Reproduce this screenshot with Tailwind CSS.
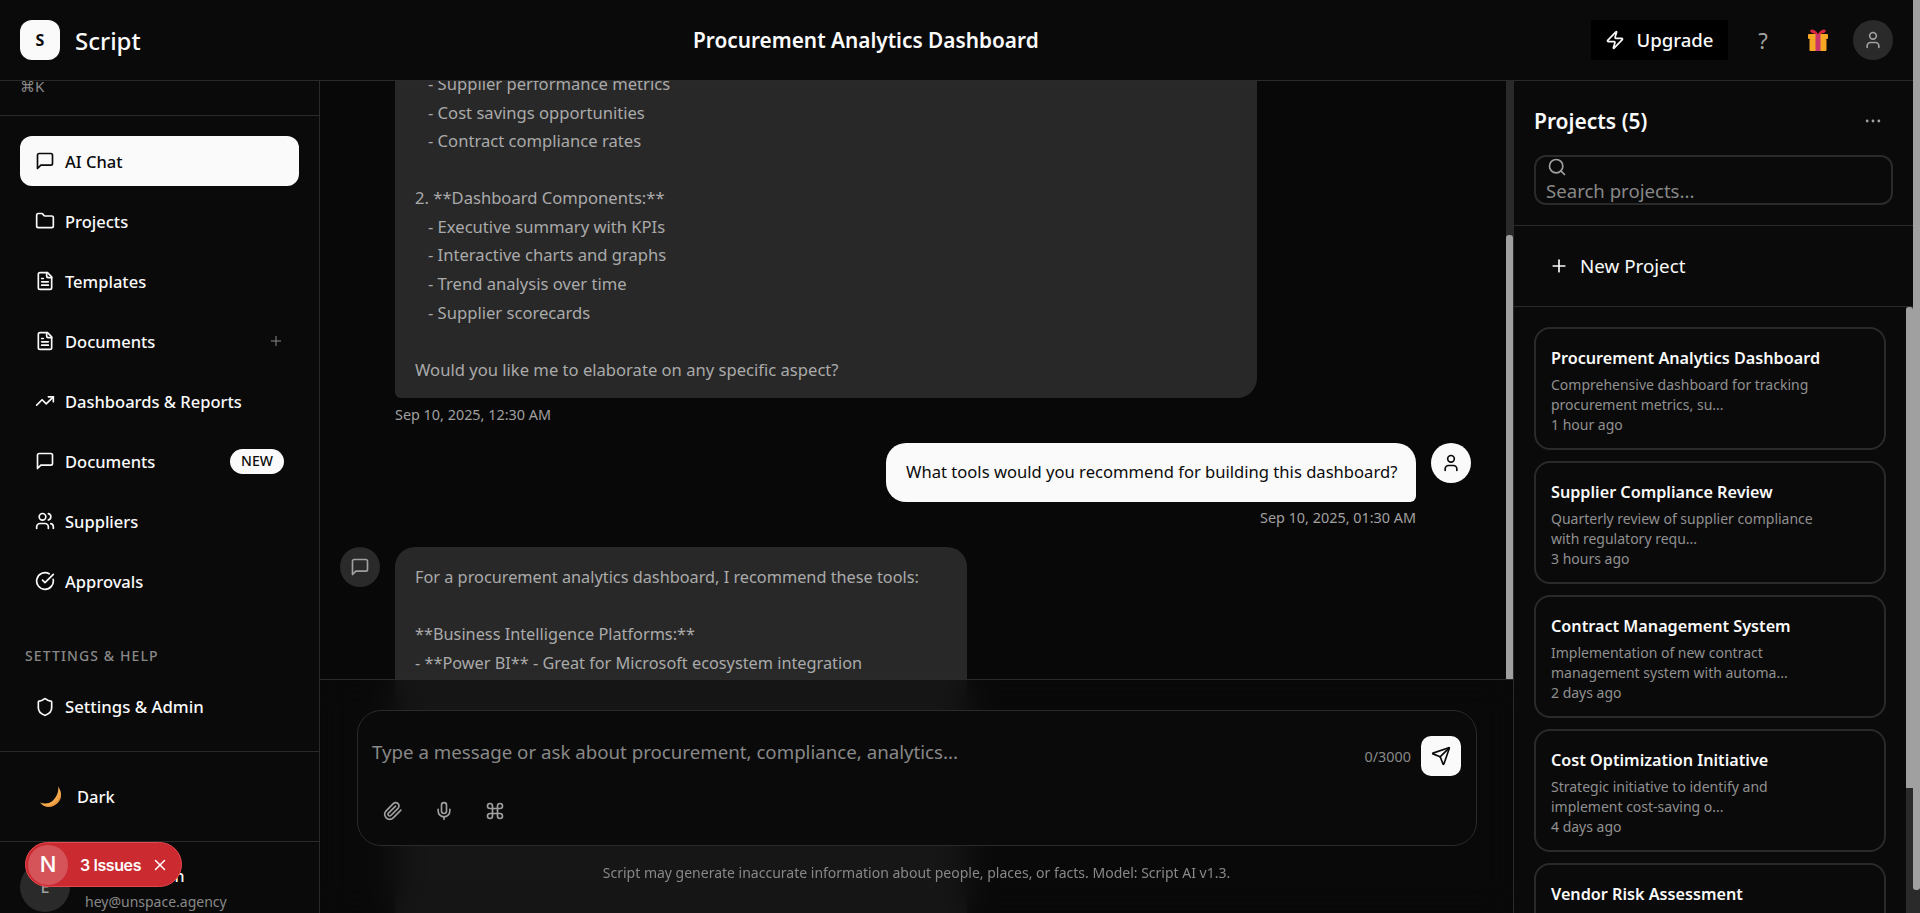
<!DOCTYPE html>
<html lang="en">
<head>
    <meta charset="UTF-8">
    <meta name="viewport" content="width=device-width, initial-scale=1.0">
    <title>Script - Procurement Analytics Dashboard</title>
    <script src="https://cdn.jsdelivr.net/npm/@tailwindcss/browser@4"></script>
</head>
<body class="bg-[#0a0a0a] font-['Noto_Sans','DejaVu_Sans',sans-serif] overflow-hidden">
<div class="flex h-[913px] w-[1920px] overflow-hidden relative">
    <div class="flex flex-col w-[1913px] h-full">
        <!-- Header -->
        <header class="h-[81px] shrink-0 bg-[#0a0a0a] border-b border-[#2a2a2a] flex items-center justify-between pl-5 pr-5">
            <div class="flex items-center gap-[15px]">
                <div class="w-10 h-10 rounded-xl bg-[#fafafa] text-[#0a0a0a] font-bold text-base flex items-center justify-center">S</div>
                <span class="mt-[2px] text-2xl font-medium text-[#fafafa]">Script</span>
            </div>
            <h1 class="mt-[2px] text-[20.800px] font-semibold text-[#fafafa]">Procurement Analytics Dashboard</h1>
            <div class="flex items-center gap-[15px]">
                <button class="h-10 w-[137px] bg-black text-[#fafafa] text-[18.600px] font-medium flex items-center justify-center gap-[11px]">
                    <svg class="w-5 h-5" viewBox="0 0 24 24" fill="none" stroke="currentColor" stroke-width="2" stroke-linecap="round" stroke-linejoin="round"><path d="M4 14a1 1 0 0 1-.78-1.630l9.900-10.200a.5.5 0 0 1 .86.46l-1.920 6.020A1 1 0 0 0 13 10h7a1 1 0 0 1 .78 1.630l-9.900 10.200a.5.5 0 0 1-.86-.46l1.920-6.020A1 1 0 0 0 11 14z"/></svg>
                    Upgrade
                </button>
                <button class="w-10 h-10 text-[#a0a0a0] text-[22px] flex items-center justify-center">?</button>
                <div class="w-10 h-10 flex items-center justify-center">
                    <svg class="w-[24px] h-[24px]" viewBox="0 0 24 24"><path d="M12 6C10 2 6 0.500 4.500 2 3 4 7 6 12 6c5 0 9-2 7.500-4C18 0.500 14 2 12 6z" fill="#d8283c"/><rect x="2" y="6" width="20" height="5" rx="1" fill="#f9a825"/><rect x="3.500" y="11" width="17" height="12" rx="1" fill="#f5a623"/><rect x="9.500" y="6" width="5" height="17" fill="#c9366a"/></svg>
                </div>
                <div class="w-10 h-10 rounded-full bg-[#2a2a2a] flex items-center justify-center text-[#a0a0a0]">
                    <svg class="w-5 h-5" viewBox="0 0 24 24" fill="none" stroke="currentColor" stroke-width="2" stroke-linecap="round" stroke-linejoin="round"><path d="M19 21v-2a4 4 0 0 0-4-4H9a4 4 0 0 0-4 4v2"/><circle cx="12" cy="7" r="4"/></svg>
                </div>
            </div>
        </header>

        <div class="flex flex-1 min-h-0">
            <!-- Sidebar -->
            <aside class="w-[320px] shrink-0 border-r border-[#2a2a2a] bg-[#0a0a0a] flex flex-col overflow-hidden relative">
                <div class="h-[35px] shrink-0 border-b border-[#2a2a2a] overflow-hidden px-5">
                    <div class="-mt-[5px] text-[15px] leading-5 text-[#888888]">⌘K</div>
                </div>
                <nav class="px-5 pt-5 flex flex-col gap-[10px] text-[16.500px] font-medium text-[#fafafa]">
                    <a class="h-[50px] rounded-xl bg-[#fafafa] text-[#0a0a0a] flex items-center gap-[10px] px-[15px]">
                        <svg class="w-5 h-5 shrink-0" viewBox="0 0 24 24" fill="none" stroke="currentColor" stroke-width="2" stroke-linecap="round" stroke-linejoin="round"><path d="M21 15a2 2 0 0 1-2 2H7l-4 4V5a2 2 0 0 1 2-2h14a2 2 0 0 1 2 2z"/></svg>
                        <span class="mt-[2px]">AI Chat</span>
                    </a>
                    <a class="h-[50px] rounded-xl flex items-center gap-[10px] px-[15px]">
                        <svg class="w-5 h-5 shrink-0" viewBox="0 0 24 24" fill="none" stroke="currentColor" stroke-width="2" stroke-linecap="round" stroke-linejoin="round"><path d="M20 20a2 2 0 0 0 2-2V8a2 2 0 0 0-2-2h-7.900a2 2 0 0 1-1.690-.9L9.600 3.900A2 2 0 0 0 7.930 3H4a2 2 0 0 0-2 2v13a2 2 0 0 0 2 2Z"/></svg>
                        <span class="mt-[2px]">Projects</span>
                    </a>
                    <a class="h-[50px] rounded-xl flex items-center gap-[10px] px-[15px]">
                        <svg class="w-5 h-5 shrink-0" viewBox="0 0 24 24" fill="none" stroke="currentColor" stroke-width="2" stroke-linecap="round" stroke-linejoin="round"><path d="M15 2H6a2 2 0 0 0-2 2v16a2 2 0 0 0 2 2h12a2 2 0 0 0 2-2V7Z"/><path d="M14 2v4a2 2 0 0 0 2 2h4"/><path d="M10 9H8"/><path d="M16 13H8"/><path d="M16 17H8"/></svg>
                        <span class="mt-[2px]">Templates</span>
                    </a>
                    <a class="h-[50px] rounded-xl flex items-center gap-[10px] px-[15px]">
                        <svg class="w-5 h-5 shrink-0" viewBox="0 0 24 24" fill="none" stroke="currentColor" stroke-width="2" stroke-linecap="round" stroke-linejoin="round"><path d="M15 2H6a2 2 0 0 0-2 2v16a2 2 0 0 0 2 2h12a2 2 0 0 0 2-2V7Z"/><path d="M14 2v4a2 2 0 0 0 2 2h4"/><path d="M10 9H8"/><path d="M16 13H8"/><path d="M16 17H8"/></svg>
                        <span class="flex-1 mt-[2px]">Documents</span>
                        <svg class="w-4 h-4 text-[#888888] mb-px" viewBox="0 0 24 24" fill="none" stroke="currentColor" stroke-width="1.500" stroke-linecap="round"><path d="M5 12h14"/><path d="M12 5v14"/></svg>
                    </a>
                    <a class="h-[50px] rounded-xl flex items-center gap-[10px] px-[15px]">
                        <svg class="w-5 h-5 shrink-0" viewBox="0 0 24 24" fill="none" stroke="currentColor" stroke-width="2" stroke-linecap="round" stroke-linejoin="round"><polyline points="22 7 13.500 15.500 8.500 10.500 2 17"/><polyline points="16 7 22 7 22 13"/></svg>
                        <span class="mt-[2px]">Dashboards &amp; Reports</span>
                    </a>
                    <a class="h-[50px] rounded-xl flex items-center gap-[10px] px-[15px]">
                        <svg class="w-5 h-5 shrink-0" viewBox="0 0 24 24" fill="none" stroke="currentColor" stroke-width="2" stroke-linecap="round" stroke-linejoin="round"><path d="M21 15a2 2 0 0 1-2 2H7l-4 4V5a2 2 0 0 1 2-2h14a2 2 0 0 1 2 2z"/></svg>
                        <span class="flex-1 mt-[2px]">Documents</span>
                        <span class="h-[25px] w-[54px] rounded-full bg-[#fafafa] text-[#0a0a0a] text-sm flex items-center justify-center">NEW</span>
                    </a>
                    <a class="h-[50px] rounded-xl flex items-center gap-[10px] px-[15px]">
                        <svg class="w-5 h-5 shrink-0" viewBox="0 0 24 24" fill="none" stroke="currentColor" stroke-width="2" stroke-linecap="round" stroke-linejoin="round"><path d="M16 21v-2a4 4 0 0 0-4-4H6a4 4 0 0 0-4 4v2"/><circle cx="9" cy="7" r="4"/><path d="M22 21v-2a4 4 0 0 0-3-3.870"/><path d="M16 3.130a4 4 0 0 1 0 7.750"/></svg>
                        <span class="mt-[2px]">Suppliers</span>
                    </a>
                    <a class="h-[50px] rounded-xl flex items-center gap-[10px] px-[15px]">
                        <svg class="w-5 h-5 shrink-0" viewBox="0 0 24 24" fill="none" stroke="currentColor" stroke-width="2" stroke-linecap="round" stroke-linejoin="round"><path d="M21.800 10A10 10 0 1 1 17 3.340"/><path d="m9 11 3 3L22 4"/></svg>
                        <span class="mt-[2px]">Approvals</span>
                    </a>
                </nav>
                <div class="px-[25px] mt-[40px] text-sm leading-5 font-medium tracking-[1.100px] text-[#888888] uppercase">Settings &amp; Help</div>
                <div class="px-5 mt-[16px] text-[16.800px] font-medium text-[#fafafa]">
                    <a class="h-[50px] rounded-xl flex items-center gap-[10px] px-[15px]">
                        <svg class="w-5 h-5 shrink-0" viewBox="0 0 24 24" fill="none" stroke="currentColor" stroke-width="2" stroke-linecap="round" stroke-linejoin="round"><path d="M20 13c0 5-3.500 7.500-7.660 8.950a1 1 0 0 1-.67-.01C7.500 20.500 4 18 4 13V6a1 1 0 0 1 1-1c2 0 4.500-1.200 6.240-2.720a1.170 1.170 0 0 1 1.520 0C14.510 3.810 17 5 19 5a1 1 0 0 1 1 1z"/></svg>
                        <span>Settings &amp; Admin</span>
                    </a>
                </div>
                <div class="mt-[19px] h-[91px] shrink-0 border-t border-b border-[#2a2a2a] px-10 flex items-center gap-[15px] text-[16.500px] font-medium text-[#fafafa]">
                    <svg class="w-[22px] h-[22px] shrink-0" viewBox="0 0 22 21"><path d="M18 0c5 6 4 15-4 19-6 3-11 1-14-3 5 2 10 1 13-2 4-4 6-9 5-14z" fill="#f4a94e"/><path d="M20 5c2 6-1 11-6 14-3 1.500-6 1.500-9 .5 4 0 8-1 11-4 2-2 4-6 4-10.500z" fill="#ea9238"/></svg>
                    <span class="mt-[2px]">Dark</span>
                </div>
                <div class="flex gap-[15px] px-5 pt-5 shrink-0">
                    <div class="w-[50px] h-[50px] rounded-full bg-[#2a2a2a] text-[#a0a0a0] flex items-center justify-center font-medium shrink-0">E</div>
                    <div class="mt-[2px]">
                        <div class="text-base leading-6 font-medium text-[#fafafa]">Ethan Martin</div>
                        <div class="mt-[4px] text-sm leading-5 text-[#888888]">hey@unspace.agency</div>
                    </div>
                </div>
                <!-- Next dev badge -->
                <div class="absolute left-[25px] top-[761px] h-[45px] w-[157px] rounded-full bg-[#ca2a30] border border-[#e5484d] flex items-center pl-[2px] font-['Inter',sans-serif]">
                    <div class="w-10 h-10 rounded-full bg-white/20 text-white text-[22px] font-medium flex items-center justify-center">N</div>
                    <span class="ml-3 text-base font-semibold text-white tracking-tight">3 Issues</span>
                    <svg class="w-[18px] h-[18px] ml-[10px] text-white" viewBox="0 0 24 24" fill="none" stroke="currentColor" stroke-width="2" stroke-linecap="round"><path d="M18 6 6 18"/><path d="m6 6 12 12"/></svg>
                </div>
            </aside>

            <!-- Chat -->
            <main class="flex-1 min-w-0 relative bg-[#080808] overflow-hidden flex">
                <div class="flex-1 min-w-0 overflow-hidden">
                    <div class="-mt-[11px] flex flex-col text-[16.600px] leading-[28.560px]">
                        <div class="pl-[75px]">
                            <div class="w-[862px] bg-[#282828] text-[#aaaaaa] rounded-br-[20px] rounded-bl-[6px] px-5 pb-[14px] whitespace-pre-wrap">   - Supplier performance metrics
   - Cost savings opportunities
   - Contract compliance rates

2. **Dashboard Components:**
   - Executive summary with KPIs
   - Interactive charts and graphs
   - Trend analysis over time
   - Supplier scorecards

Would you like me to elaborate on any specific aspect?</div>
                            <div class="mt-[7px] text-[14.400px] leading-5 text-[#a0a0a0]">Sep 10, 2025, 12:30 AM</div>
                        </div>
                        <div class="mt-[18px] flex justify-end gap-[15px] pr-[35px]">
                            <div class="flex flex-col items-end">
                                <div class="h-[59px] w-[530px] rounded-[20px] rounded-br-[6px] bg-[#fafafa] text-[#0a0a0a] px-5 flex items-center whitespace-nowrap">What tools would you recommend for building this dashboard?</div>
                                <div class="mt-[6px] text-[14.400px] leading-5 text-[#a0a0a0]">Sep 10, 2025, 01:30 AM</div>
                            </div>
                            <div class="w-10 h-10 rounded-full bg-[#fafafa] text-[#0a0a0a] flex items-center justify-center shrink-0">
                                <svg class="w-5 h-5" viewBox="0 0 24 24" fill="none" stroke="currentColor" stroke-width="2" stroke-linecap="round" stroke-linejoin="round"><path d="M19 21v-2a4 4 0 0 0-4-4H9a4 4 0 0 0-4 4v2"/><circle cx="12" cy="7" r="4"/></svg>
                            </div>
                        </div>
                        <div class="mt-[19px] flex gap-[15px] pl-5">
                            <div class="w-10 h-10 rounded-full bg-[#2a2a2a] text-[#a0a0a0] flex items-center justify-center shrink-0">
                                <svg class="w-5 h-5" viewBox="0 0 24 24" fill="none" stroke="currentColor" stroke-width="2" stroke-linecap="round" stroke-linejoin="round"><path d="M21 15a2 2 0 0 1-2 2H7l-4 4V5a2 2 0 0 1 2-2h14a2 2 0 0 1 2 2z"/></svg>
                            </div>
                            <div class="w-[572px] h-[500px] rounded-t-[20px] bg-[#282828] text-[#aaaaaa] text-[16.300px] px-5 pt-4 whitespace-pre-wrap">For a procurement analytics dashboard, I recommend these tools:

**Business Intelligence Platforms:**
- **Power BI** - Great for Microsoft ecosystem integration</div>
                        </div>
                    </div>
                </div>
                <!-- Chat scrollbar -->
                <div class="w-[7px] shrink-0 h-[598px] bg-[#2a2a2a]">
                    <div class="mt-[154px] h-[444px] bg-[#a0a0a0] rounded-t-[3px]"></div>
                </div>
                <!-- Input panel over the messages -->
                <div class="absolute left-0 right-0 bottom-0 h-[234px] border-t border-[#2a2a2a] bg-[#0a0a0a]/60 backdrop-blur-lg px-[37px] pt-[30px]">
                    <div class="h-[136px] w-[1120px] rounded-3xl border border-[#2a2a2a] bg-[#0a0a0a] px-[14px] pt-[25px]">
                        <div class="flex items-start">
                            <div class="flex-1 text-[18.700px] leading-[32px] text-[#888888]">Type a message or ask about procurement, compliance, analytics...</div>
                            <div class="text-[14.400px] leading-5 text-[#888888] mt-[11px] mr-[10px]">0/3000</div>
                            <button class="w-10 h-10 mr-px rounded-[10px] bg-[#fafafa] text-[#0a0a0a] flex items-center justify-center">
                                <svg class="w-5 h-5" viewBox="0 0 24 24" fill="none" stroke="currentColor" stroke-width="2" stroke-linecap="round" stroke-linejoin="round"><path d="M14.536 21.686a.5.5 0 0 0 .937-.024l6.500-19a.496.496 0 0 0-.635-.635l-19 6.500a.5.5 0 0 0-.024.937l7.930 3.180a2 2 0 0 1 1.112 1.110z"/><path d="m21.854 2.147-10.940 10.939"/></svg>
                            </button>
                        </div>
                        <div class="flex items-center gap-[31px] mt-[25px] pl-[11px] text-[#a0a0a0]">
                            <svg class="w-5 h-5" viewBox="0 0 24 24" fill="none" stroke="currentColor" stroke-width="2" stroke-linecap="round" stroke-linejoin="round"><path d="m21.440 11.050-9.190 9.190a6 6 0 0 1-8.490-8.490l8.570-8.570A4 4 0 1 1 18 8.840l-8.590 8.570a2 2 0 0 1-2.830-2.830l8.490-8.480"/></svg>
                            <svg class="w-5 h-5" viewBox="0 0 24 24" fill="none" stroke="currentColor" stroke-width="2" stroke-linecap="round" stroke-linejoin="round"><path d="M12 2a3 3 0 0 0-3 3v7a3 3 0 0 0 6 0V5a3 3 0 0 0-3-3Z"/><path d="M19 10v2a7 7 0 0 1-14 0v-2"/><line x1="12" x2="12" y1="19" y2="22"/></svg>
                            <svg class="w-5 h-5" viewBox="0 0 24 24" fill="none" stroke="currentColor" stroke-width="2" stroke-linecap="round" stroke-linejoin="round"><path d="M15 6v12a3 3 0 1 0 3-3H6a3 3 0 1 0 3 3V6a3 3 0 1 0-3 3h12a3 3 0 1 0-3-3"/></svg>
                        </div>
                    </div>
                    <p class="mt-[17px] text-center text-sm leading-5 text-[#888888]">Script may generate inaccurate information about people, places, or facts. Model: Script AI v1.3.</p>
                </div>
            </main>

            <!-- Projects panel -->
            <section class="w-[400px] shrink-0 border-l border-[#2a2a2a] bg-[#0a0a0a] flex flex-col min-h-0">
                <div class="h-[145px] shrink-0 border-b border-[#2a2a2a] px-5 pt-[24px]">
                    <div class="flex items-center justify-between">
                        <h2 class="text-[21px] leading-8 font-semibold text-[#fafafa]">Projects (5)</h2>
                        <svg class="w-5 h-5 mr-2.5 text-[#a0a0a0]" viewBox="0 0 24 24" fill="currentColor"><circle cx="5" cy="12" r="1.700"/><circle cx="12" cy="12" r="1.700"/><circle cx="19" cy="12" r="1.700"/></svg>
                    </div>
                    <div class="mt-[18px] h-[50px] rounded-xl border-2 border-[#2a2a2a] pl-[10px] overflow-hidden">
                        <svg class="w-5 h-5 ml-px text-[#a0a0a0]" viewBox="0 0 24 24" fill="none" stroke="currentColor" stroke-width="2" stroke-linecap="round" stroke-linejoin="round"><circle cx="11" cy="11" r="8"/><path d="m21 21-4.300-4.300"/></svg>
                        <div class="mt-[2px] text-[18.600px] leading-6 text-[#888888]">Search projects...</div>
                    </div>
                </div>
                <div class="h-[81px] shrink-0 border-b border-[#2a2a2a] px-[35px] flex items-center gap-[11px] text-[18.800px] text-[#fafafa]">
                    <svg class="w-5 h-5 shrink-0" viewBox="0 0 24 24" fill="none" stroke="currentColor" stroke-width="2" stroke-linecap="round"><path d="M5 12h14"/><path d="M12 5v14"/></svg>
                    New Project
                </div>
                <div class="flex flex-1 min-h-0">
                    <div class="flex-1 min-w-0 overflow-hidden px-5 pt-5 flex flex-col gap-[11px]">
                        <div class="h-[123px] shrink-0 rounded-2xl border-2 border-[#2a2a2a] px-[15px] pt-[17px]">
                            <div class="text-[16.200px] leading-6 font-semibold text-[#fafafa]">Procurement Analytics Dashboard</div>
                            <div class="mt-[5px] text-sm leading-5 text-[#909090]">Comprehensive dashboard for tracking<br>procurement metrics, su...<br>1 hour ago</div>
                        </div>
                        <div class="h-[123px] shrink-0 rounded-2xl border-2 border-[#2a2a2a] px-[15px] pt-[17px]">
                            <div class="text-[16.200px] leading-6 font-semibold text-[#fafafa]">Supplier Compliance Review</div>
                            <div class="mt-[5px] text-sm leading-5 text-[#909090]">Quarterly review of supplier compliance<br>with regulatory requ...<br>3 hours ago</div>
                        </div>
                        <div class="h-[123px] shrink-0 rounded-2xl border-2 border-[#2a2a2a] px-[15px] pt-[17px]">
                            <div class="text-[16.200px] leading-6 font-semibold text-[#fafafa]">Contract Management System</div>
                            <div class="mt-[5px] text-sm leading-5 text-[#909090]">Implementation of new contract<br>management system with automa...<br>2 days ago</div>
                        </div>
                        <div class="h-[123px] shrink-0 rounded-2xl border-2 border-[#2a2a2a] px-[15px] pt-[17px]">
                            <div class="text-[16.200px] leading-6 font-semibold text-[#fafafa]">Cost Optimization Initiative</div>
                            <div class="mt-[5px] text-sm leading-5 text-[#909090]">Strategic initiative to identify and<br>implement cost-saving o...<br>4 days ago</div>
                        </div>
                        <div class="h-[123px] shrink-0 rounded-2xl border-2 border-[#2a2a2a] px-[15px] pt-[17px]">
                            <div class="text-[16.200px] leading-6 font-semibold text-[#fafafa]">Vendor Risk Assessment</div>
                        </div>
                    </div>
                    <!-- Projects scrollbar -->
                    <div class="w-[7px] shrink-0 bg-[#2a2a2a]">
                        <div class="h-[481px] bg-[#a0a0a0] rounded-t-[3px]"></div>
                    </div>
                </div>
            </section>
        </div>
    </div>
    <!-- Page scrollbar -->
    <div class="w-[7px] shrink-0 bg-[#2a2a2a]">
        <div class="h-[890px] bg-[#a0a0a0] rounded-b-[3px]"></div>
    </div>
</div>
</body>
</html>
